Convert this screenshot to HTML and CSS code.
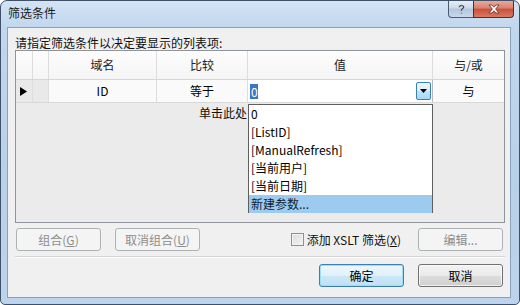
FILE: index.html
```html
<!DOCTYPE html>
<html lang="zh-CN">
<head>
<meta charset="utf-8">
<title>筛选条件</title>
<link rel="stylesheet" href="styles.css">
</head>
<body>
<div class="window">
  <div class="titlebar">
    <span class="title">筛选条件</span>
    <div class="caption">
      <span class="cbtn help"><svg width="9" height="11" viewBox="0 0 9 11"><path d="M1.5 3.2 C1.5 1.5 3 0.8 4.5 0.8 C6.2 0.8 7.5 1.8 7.5 3.2 C7.5 4.6 5.6 5 5.2 6 L5.2 7.2 L3.6 7.2 L3.6 5.8 C3.9 4.4 5.8 4.1 5.8 3.2 C5.8 2.6 5.2 2.2 4.5 2.2 C3.8 2.2 3.2 2.6 3.2 3.4 Z M3.6 8.4 H5.2 V10 H3.6 Z" fill="#2b3442" stroke="#e9eef5" stroke-width="0.5"/></svg></span>
      <span class="cbtn close"><svg width="12" height="10" viewBox="0 0 12 10"><path d="M1 1 L4 1 L6 3.2 L8 1 L11 1 L7.6 5 L11 9 L8 9 L6 6.8 L4 9 L1 9 L4.4 5 Z" fill="#fff" stroke="#6b2a22" stroke-width="0.8" stroke-linejoin="round"/></svg></span>
    </div>
  </div>
  <div class="client">
    <div class="prompt">请指定筛选条件以决定要显示的列表项:</div>
    <div class="grid">
      <div class="row head">
        <div class="cell rh"></div>
        <div class="cell rh"></div>
        <div class="cell">域名</div>
        <div class="cell">比较</div>
        <div class="cell">值</div>
        <div class="cell last">与/或</div>
      </div>
      <div class="row data">
        <div class="cell rh arrow"><svg width="7" height="9" viewBox="0 0 7 9"><path d="M0 0 L7 4.5 L0 9 Z" fill="#000"/></svg></div>
        <div class="cell rh"></div>
        <div class="cell">ID</div>
        <div class="cell">等于</div>
        <div class="cell combo-cell">
          <div class="combo">
            <span class="combo-text">0</span>
            <span class="combo-btn"><svg width="7" height="4" viewBox="0 0 7 4"><path d="M0 0 H7 L3.5 4 Z" fill="#000"/></svg></span>
          </div>
        </div>
        <div class="cell last">与</div>
      </div>
      <div class="addrow"><span class="addtext">单击此处</span></div>
      <ul class="dropdown">
        <li>0</li>
        <li>[ListID]</li>
        <li>[ManualRefresh]</li>
        <li>[当前用户]</li>
        <li>[当前日期]</li>
        <li class="sel">新建参数...</li>
      </ul>
    </div>
    <div class="actions">
      <button class="btn disabled">组合(<u>G</u>)</button>
      <button class="btn disabled">取消组合(<u>U</u>)</button>
      <label class="check"><span class="box"></span>添加 XSLT 筛选(<u>X</u>)</label>
      <button class="btn disabled">编辑...</button>
    </div>
    <div class="sep"></div>
    <div class="footer">
      <button class="btn default">确定</button>
      <button class="btn">取消</button>
    </div>
  </div>
</div>
</body>
</html>
```

FILE: styles.css
```css
* { box-sizing: border-box; margin: 0; padding: 0; }
html, body { width: 520px; height: 305px; overflow: hidden; }
body {
  font-family: "Noto Sans CJK SC", "Microsoft YaHei", sans-serif;
  font-size: 12px;
  color: #000;
  background: #fff;
}
.window {
  width: 520px;
  height: 305px;
  border: 1px solid #3f5169;
  border-radius: 7px 7px 5px 5px;
  background: linear-gradient(180deg, #d3e3f4 0, #c1d7ee 26px, #b9d0ea 60%, #bed3ec 100%);
  display: flex;
  flex-direction: column;
}
.titlebar {
  height: 26px;
  display: flex;
  justify-content: space-between;
  align-items: flex-start;
  padding: 0 5px 0 7px;
}
.title {
  line-height: 24px;
  color: #1a1a1a;
}
.caption { display: flex; }
.cbtn {
  height: 17px;
  display: flex;
  align-items: center;
  justify-content: center;
  border: 1px solid #4d5a6e;
  border-top: none;
}
.help {
  width: 25px;
  border-radius: 0 0 0 4px;
  border-right: none;
  background: linear-gradient(180deg, #e6eef8 0, #cbd9ea 45%, #b3c6de 50%, #c9d9ea 100%);
}
.close {
  width: 41px;
  border-radius: 0 0 4px 0;
  border-color: #5a2a24;
  background: linear-gradient(180deg, #e9a99a 0, #d8806d 45%, #c9503b 50%, #d9785f 100%);
}
.client {
  flex: 1;
  margin: 0 8px 6px 6px;
  border: 1px solid #8aa1bd;
  background: #f0f0f0;
  padding: 7px 5px 0 7px;
  display: flex;
  flex-direction: column;
}
.prompt {
  line-height: 15px;
  height: 15px;
  color: #111;
}
.grid {
  position: relative;
  height: 173px;
  border: 1px solid #8f949b;
  background: #ebebeb;
}
.row {
  display: grid;
  grid-template-columns: 17px 16px 108px 91px 185px 71px;
}
.cell {
  border-right: 1px solid #dcdcdc;
  text-align: center;
  white-space: nowrap;
}
.cell.last { border-right: none; }
.head {
  height: 29px;
  border-bottom: 1px solid #d6d6d6;
  background: linear-gradient(180deg, #fdfdfd 0, #f5f5f5 100%);
}
.head .cell { line-height: 28px; color: #222; }
.data {
  height: 23px;
  border-bottom: 1px solid #d9d9d9;
  background: #fafafa;
}
.data .cell { line-height: 22px; }
.data .rh { background: #e9e9e9; border-right-color: #dedede; }
.arrow {
  display: flex;
  align-items: center;
  justify-content: flex-start;
  padding-left: 4px;
}
.combo-cell { padding: 0; border-right: 1px solid #b8b8b8; }
.combo {
  height: 22px;
  background: #fff;
  display: flex;
  align-items: center;
  padding-left: 2px;
  padding-right: 1px;
}
.combo-text {
  background: #3a78c6;
  color: #fff;
  line-height: 15px;
  padding: 0 0 0 1px;
  width: 8px;
  text-align: left;
}
.combo-btn {
  margin-left: auto;
  width: 15px;
  height: 18px;
  border: 1px solid #3c7fb1;
  border-radius: 2px;
  background: linear-gradient(180deg, #eaf6fd 0, #d9f0fc 50%, #bee6fd 51%, #a7d9f5 100%);
  display: flex;
  align-items: center;
  justify-content: center;
}
.addrow {
  width: 231px;
  height: 19px;
  display: flex;
  justify-content: flex-end;
  white-space: nowrap;
}
.addtext {
  line-height: 19px;
  color: #111;
}
.dropdown {
  position: absolute;
  left: 232px;
  top: 53px;
  width: 185px;
  height: 109px;
  border: 1px solid #5f5f5f;
  background: #fff;
  list-style: none;
}
.dropdown li {
  height: 18px;
  line-height: 18px;
  padding-left: 2px;
  white-space: nowrap;
}
.dropdown li.sel {
  background: #9dcbef;
  color: #0d1e33;
}
.actions {
  margin-top: 5px;
  height: 23px;
  display: flex;
  align-items: center;
  padding: 0 2px 0 1px;
}
.btn {
  font-family: inherit;
  font-size: 12px;
  width: 85px;
  height: 23px;
  border: 1px solid #707070;
  border-radius: 3px;
  background: linear-gradient(180deg, #f2f2f2 0, #ebebeb 50%, #dddddd 51%, #cfcfcf 100%);
  color: #000;
  box-shadow: inset 0 0 0 1px rgba(255, 255, 255, 0.7);
}
.btn u { text-underline-offset: 1px; }
.btn.disabled {
  border-color: #adb2b5;
  background: #f4f4f4;
  color: #8d8d8d;
  box-shadow: none;
}
.actions .btn + .btn { margin-left: 14px; }
.check {
  margin-left: auto;
  margin-right: 17px;
  display: flex;
  align-items: center;
  color: #111;
}
.box {
  width: 13px;
  height: 13px;
  border: 1px solid #8e8f8f;
  background: linear-gradient(135deg, #dcdcdc 0, #f4f4f4 100%);
  box-shadow: inset 0 0 0 1px #f4f4f4;
  margin-right: 3px;
}
.sep {
  margin-top: 5px;
  height: 2px;
  border-top: 1px solid #d5d5d5;
  border-bottom: 1px solid #fdfdfd;
}
.footer {
  margin-top: 6px;
  display: flex;
  justify-content: flex-end;
  gap: 14px;
  padding-right: 2px;
}
.btn.default {
  border-color: #3c7fb1;
  box-shadow: inset 0 0 0 1px #9fdcf8;
  background: linear-gradient(180deg, #edf7fd 0, #dff1fb 50%, #cbe7f7 51%, #bfe1f5 100%);
}
```
